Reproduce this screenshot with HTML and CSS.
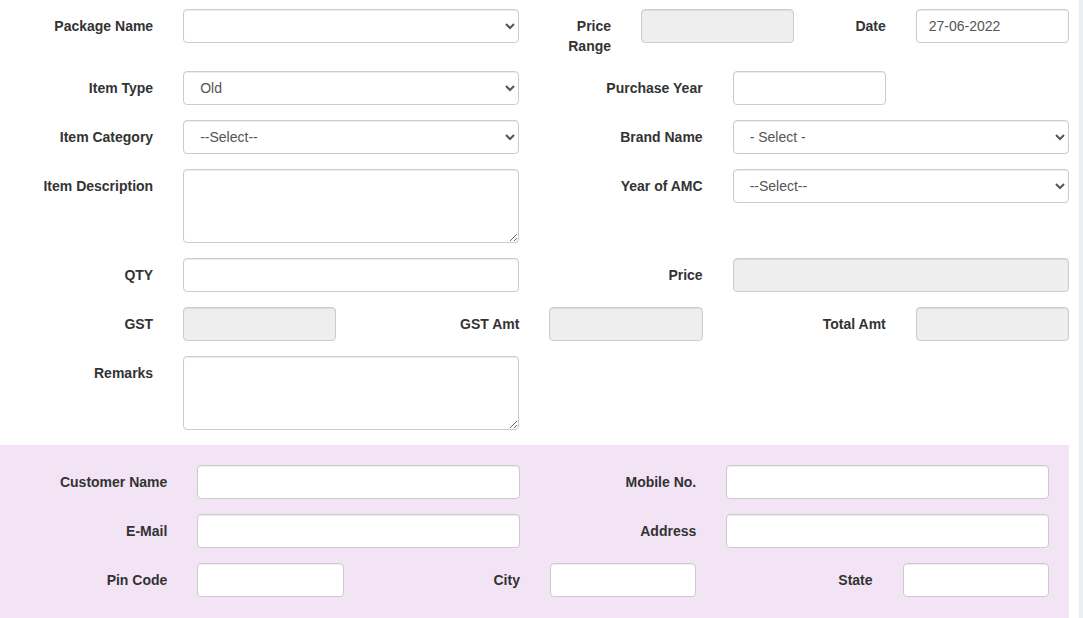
FILE: index.html
```html
<!DOCTYPE html>
<html>
<head>
<meta charset="utf-8">
<link rel="stylesheet" href="styles.css">
</head>
<body>
<div class="page">
  <div class="main">
    <form class="top">
      <label class="lbl c2">Package Name</label>
      <div class="c4"><select class="fc"><option></option></select></div>
      <label class="lbl c1">Price Range</label>
      <div class="c2"><input class="fc" disabled></div>
      <label class="lbl c1">Date</label>
      <div class="c2"><input class="fc" value="27-06-2022"></div>

      <label class="lbl c2">Item Type</label>
      <div class="c4"><select class="fc"><option>Old</option></select></div>
      <label class="lbl c2">Purchase Year</label>
      <div class="c2"><input class="fc"></div>
      <div class="c2"></div>

      <label class="lbl c2">Item Category</label>
      <div class="c4"><select class="fc"><option>--Select--</option></select></div>
      <label class="lbl c2">Brand Name</label>
      <div class="c4"><select class="fc"><option>- Select -</option></select></div>

      <label class="lbl c2">Item Description</label>
      <div class="c4"><textarea class="fc ta"></textarea></div>
      <label class="lbl c2">Year of AMC</label>
      <div class="c4"><select class="fc"><option>--Select--</option></select></div>

      <label class="lbl c2">QTY</label>
      <div class="c4"><input class="fc"></div>
      <label class="lbl c2">Price</label>
      <div class="c4"><input class="fc" disabled></div>

      <label class="lbl c2">GST</label>
      <div class="c2"><input class="fc" disabled></div>
      <label class="lbl c2">GST Amt</label>
      <div class="c2"><input class="fc" disabled></div>
      <label class="lbl c2">Total Amt</label>
      <div class="c2"><input class="fc" disabled></div>

      <label class="lbl c2">Remarks</label>
      <div class="c4"><textarea class="fc ta"></textarea></div>
      <div class="c6"></div>
    </form>

    <div class="cust">
      <form class="cgrid">
        <label class="lbl c2">Customer Name</label>
        <div class="c4"><input class="fc"></div>
        <label class="lbl c2">Mobile No.</label>
        <div class="c4"><input class="fc"></div>

        <label class="lbl c2">E-Mail</label>
        <div class="c4"><input class="fc"></div>
        <label class="lbl c2">Address</label>
        <div class="c4"><input class="fc"></div>

        <label class="lbl c2">Pin Code</label>
        <div class="c2"><input class="fc"></div>
        <label class="lbl c2">City</label>
        <div class="c2"><input class="fc"></div>
        <label class="lbl c2">State</label>
        <div class="c2"><input class="fc"></div>
      </form>
    </div>
  </div>
  <div class="strip"></div>
</div>
</body>
</html>
```

FILE: styles.css
```css
html, body {
  margin: 0;
  padding: 0;
  background: #fff;
  overflow: hidden;
}
body {
  font-family: "Liberation Sans", Arial, sans-serif;
  font-size: 14px;
  line-height: 20px;
  color: #333;
}
.page {
  display: flex;
  width: 1083px;
  height: 618px;
}
.main {
  width: 1069px;
  overflow: hidden;
  flex: none;
  display: flex;
  flex-direction: column;
}
.strip {
  margin-left: 10px;
  width: 4px;
  background: #eaedf3;
  flex: none;
}
.top {
  display: grid;
  grid-template-columns: repeat(12, 91.583px);
  margin: 9px 0 15px -15px;
  width: 1099px;
  row-gap: 15px;
  align-items: start;
}
.cust {
  flex: 1;
  background: #f2e4f5;
  padding: 20px 0 20px 6px;
}
.cgrid {
  display: grid;
  grid-template-columns: repeat(12, 88.167px);
  width: 1058px;
  row-gap: 15px;
  align-items: start;
}
.c1 { grid-column: span 1; }
.c2 { grid-column: span 2; }
.c4 { grid-column: span 4; }
.c6 { grid-column: span 6; }
.top > *, .cgrid > * {
  padding: 0 15px;
  box-sizing: border-box;
  min-width: 0;
}
.lbl {
  font-weight: bold;
  text-align: right;
  padding-top: 7px;
}
.fc {
  display: block;
  width: 100%;
  height: 34px;
  box-sizing: border-box;
  padding: 6px 12px;
  font-family: "Liberation Sans", Arial, sans-serif;
  font-size: 14px;
  line-height: 20px;
  color: #555;
  background: #fff;
  border: 1px solid #ccc;
  border-radius: 4px;
  box-shadow: inset 0 1px 1px rgba(0,0,0,0.075);
  margin: 0;
}
select.fc {
  padding: 6px 8px 6px 12px;
}
.fc:disabled {
  background: #eee;
}
.ta {
  height: 74px;
  resize: vertical;
}
```
